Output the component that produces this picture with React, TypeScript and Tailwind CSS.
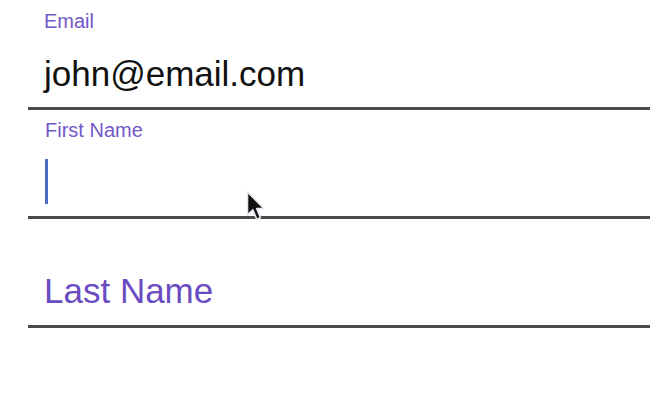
import React from "react";

const font = { fontFamily: '"Liberation Sans", Arial, sans-serif' };

function Pointer() {
  return (
    <svg width="22" height="34" viewBox="0 0 16 26" className="absolute left-[245px] top-[190px]">
      <path
        d="M1.5 1.5 L1.5 19 L5.6 15.2 L8.6 22.4 L11.4 21.2 L8.5 14.2 L14 14.2 Z"
        fill="#111"
        stroke="#e8e8f0"
        strokeWidth="1.2"
        strokeLinejoin="round"
      />
    </svg>
  );
}

export default function App() {
  return (
    <div className="relative w-[650px] h-[400px] bg-white overflow-hidden" style={font}>
      <div className="pl-[28px]">
        {/* Email */}
        <div className="h-[110px] border-b-[3px] border-[#4c4c47] pl-[16px] pt-[9px] flex flex-col">
          <span className="text-[20px] leading-[24px] text-[#7258c6]">Email</span>
          <span className="mt-[21px] text-[35px] leading-[40px] text-[#111]">john@email.com</span>
        </div>

        {/* First Name (focused) */}
        <div className="h-[109px] border-b-[3px] border-[#4c4c47] pl-[17px] pt-[8px] flex flex-col">
          <span className="text-[20px] leading-[24px] text-[#7258c6]">First Name</span>
          <span className="mt-[17px] block w-[3px] h-[45px] bg-[#4b6cc1]" />
        </div>

        {/* Last Name (placeholder) */}
        <div className="h-[109px] border-b-[3px] border-[#4c4c47] pl-[16px] pt-[52px] flex flex-col">
          <span className="text-[35px] leading-[40px] text-[#6a4cc2]">Last Name</span>
        </div>
      </div>

      <Pointer />
    </div>
  );
}
